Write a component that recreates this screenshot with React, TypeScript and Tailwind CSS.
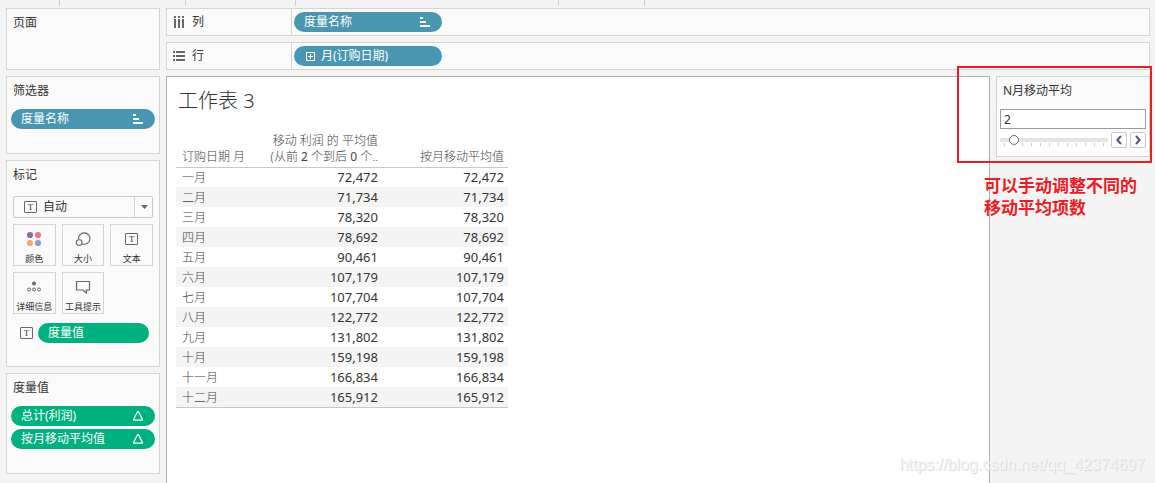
import { useState } from 'react';
import type { ReactNode } from 'react';

const rows = [
  { month: '一月', average: '72,472', monthly: '72,472' },
  { month: '二月', average: '71,734', monthly: '71,734' },
  { month: '三月', average: '78,320', monthly: '78,320' },
  { month: '四月', average: '78,692', monthly: '78,692' },
  { month: '五月', average: '90,461', monthly: '90,461' },
  { month: '六月', average: '107,179', monthly: '107,179' },
  { month: '七月', average: '107,704', monthly: '107,704' },
  { month: '八月', average: '122,772', monthly: '122,772' },
  { month: '九月', average: '131,802', monthly: '131,802' },
  { month: '十月', average: '159,198', monthly: '159,198' },
  { month: '十一月', average: '166,834', monthly: '166,834' },
  { month: '十二月', average: '165,912', monthly: '165,912' },
];

const ticks = Array.from({ length: 12 }, (_, i) => i + 1);

function TextIcon() {
  return (
    <span className="flex h-3 w-[13px] shrink-0 items-center justify-center rounded-[1px] border border-[#666] font-['Liberation_Serif',serif] text-[9px] leading-none text-[#333]">
      T
    </span>
  );
}

function SortIcon() {
  return (
    <svg width="10" height="10" viewBox="0 0 10 10" fill="currentColor" aria-hidden="true">
      <rect x="0" y="0" width="3" height="2" />
      <rect x="0" y="4" width="6" height="2" />
      <rect x="0" y="8" width="10" height="2" />
    </svg>
  );
}

function DeltaIcon() {
  return (
    <svg width="10" height="10" viewBox="0 0 10 10" fill="none" stroke="currentColor" strokeWidth="1.2" aria-hidden="true">
      <path d="M4.6 0.6h0.8L9.2 8v1.2H0.8V8z" />
    </svg>
  );
}

function ExpandIcon() {
  return (
    <svg width="9" height="9" viewBox="0 0 9 9" fill="none" stroke="currentColor" aria-hidden="true">
      <rect x="0.5" y="0.5" width="8" height="8" />
      <path d="M2 4.5h5M4.5 2v5" />
    </svg>
  );
}

function ColumnsIcon() {
  return (
    <svg width="12" height="12" viewBox="0 0 12 12" fill="#666" aria-hidden="true">
      <path d="M1 0h2v2H1zM5 0h2v2H5zM9 0h2v2H9zM1 3h2v9H1zM5 3h2v9H5zM9 3h2v9H9z" />
    </svg>
  );
}

function RowsIcon() {
  return (
    <svg width="12" height="10" viewBox="0 0 12 10" fill="#666" aria-hidden="true">
      <path d="M0 0h2v2H0zM0 4h2v2H0zM0 8h2v2H0zM3 0h9v2H3zM3 4h9v2H3zM3 8h9v2H3z" />
    </svg>
  );
}

function ColorIcon() {
  return (
    <svg width="16" height="16" viewBox="0 0 16 16" aria-hidden="true">
      <circle cx="4" cy="4" r="3.1" fill="#8a7099" />
      <circle cx="12" cy="4" r="3.1" fill="#fb7185" />
      <circle cx="4" cy="12" r="3.1" fill="#f4a77a" />
      <circle cx="12" cy="12" r="3.1" fill="#82a4cc" />
    </svg>
  );
}

function SizeIcon() {
  return (
    <svg width="16" height="16" viewBox="0 0 16 16" fill="none" stroke="#666" strokeWidth="1.1" aria-hidden="true">
      <path d="M3.6 8.5a5.7 5.7 0 1 1 3.6 4.4" />
      <circle cx="4.2" cy="11.6" r="2.9" />
    </svg>
  );
}

function DetailIcon() {
  return (
    <svg width="16" height="16" viewBox="0 0 16 16" fill="none" stroke="#666" aria-hidden="true">
      <circle cx="8" cy="4.5" r="2" fill="#666" stroke="none" />
      <circle cx="3" cy="10.5" r="1.5" />
      <circle cx="8" cy="10.5" r="1.5" />
      <circle cx="13" cy="10.5" r="1.5" />
    </svg>
  );
}

function TooltipIcon() {
  return (
    <svg width="16" height="16" viewBox="0 0 16 16" fill="none" stroke="#666" strokeWidth="1.2" strokeLinejoin="round" aria-hidden="true">
      <path d="M1.5 2.5h13v8.5h-3v3.2l-3.4-3.2H1.5z" />
    </svg>
  );
}

function Card({ title, className, children }: { title: string; className: string; children?: ReactNode }) {
  return (
    <section className={`border border-[#d4d4d4] bg-[#fafafa] ${className}`}>
      <h2 className="h-8 px-1.5 leading-7">{title}</h2>
      {children}
    </section>
  );
}

function Pill({ label, className, before, after }: { label: string; className: string; before?: ReactNode; after?: ReactNode }) {
  return (
    <button type="button" className={`flex h-5 items-center rounded-full pr-3 pl-2.5 text-left leading-5 text-white ${className}`}>
      {before}
      <span className="flex-1">{label}</span>
      {after}
    </button>
  );
}

function Shelf({ icon, label, children }: { icon: ReactNode; label: string; children: ReactNode }) {
  return (
    <section className="flex h-7 border border-[#d4d4d4] bg-[#fafafa]">
      <h2 className="flex w-[125px] shrink-0 items-center gap-[7px] border-r border-[#d4d4d4] pl-1.5">
        {icon}
        {label}
      </h2>
      <div className="flex items-center pl-0.5">{children}</div>
    </section>
  );
}

function MarkButton({ icon, label }: { icon: ReactNode; label: string }) {
  return (
    <button type="button" className="flex h-[42px] flex-col items-center border border-[#d4d4d4] bg-[#fafafa] pt-1.5 text-[9px] leading-3 whitespace-nowrap">
      <span className="flex h-4 items-center">{icon}</span>
      <span className="mt-1.5">{label}</span>
    </button>
  );
}

export default function App() {
  const [months, setMonths] = useState(2);
  const step = (by: number) => setMonths((n) => Math.min(12, Math.max(1, n + by)));

  return (
    <div className="relative flex min-h-screen flex-col bg-[#f4f4f4] font-['Noto_Sans','Noto_Sans_CJK_SC',sans-serif] text-xs text-[#333]">
      <div className="flex h-1.5 shrink-0">
        <span className="w-[60px] border-r border-[#d0d0d0]" />
        <span className="w-[126px] border-r border-[#d0d0d0]" />
        <span className="w-[110px] border-r border-[#d0d0d0]" />
        <span className="w-[263px] border-r border-[#d0d0d0]" />
        <span className="w-[86px] border-r border-[#d0d0d0]" />
      </div>

      <div className="flex flex-1 gap-1.5 pt-0.5 pr-[5px] pl-1.5">
        <aside className="flex w-[154px] shrink-0 flex-col gap-1.5">
          <Card title="页面" className="h-[62px]" />

          <Card title="筛选器" className="h-[78px]">
            <div className="flex flex-col px-1">
              <Pill label="度量名称" className="bg-[#4996b2]" after={<SortIcon />} />
            </div>
          </Card>

          <Card title="标记" className="h-[207px]">
            <div className="px-1.5 pt-[3px]">
              <div className="relative">
                <select aria-label="标记类型" className="block h-[22px] w-full appearance-none rounded-[2px] border border-[#c8c8c8] bg-[#fafafa] pl-[29px] text-xs leading-5">
                  <option>自动</option>
                </select>
                <span className="pointer-events-none absolute inset-0 flex items-center pl-[11px]">
                  <TextIcon />
                  <span className="ml-auto flex h-5 w-[19px] items-center justify-center border-l border-[#d4d4d4]">
                    <svg width="7" height="4" viewBox="0 0 7 4" fill="#666" aria-hidden="true">
                      <path d="M0 0h7L3.5 4z" />
                    </svg>
                  </span>
                </span>
              </div>

              <div className="mt-1.5 grid grid-cols-3 gap-1.5">
                <MarkButton icon={<ColorIcon />} label="颜色" />
                <MarkButton icon={<SizeIcon />} label="大小" />
                <MarkButton icon={<TextIcon />} label="文本" />
                <MarkButton icon={<DetailIcon />} label="详细信息" />
                <MarkButton icon={<TooltipIcon />} label="工具提示" />
              </div>

              <div className="mt-[9px] flex items-center gap-[5px] pr-1 pl-[7px]">
                <TextIcon />
                <Pill label="度量值" className="flex-1 bg-[#00b180]" />
              </div>
            </div>
          </Card>

          <Card title="度量值" className="h-[101px]">
            <div className="flex flex-col gap-[3px] px-1">
              <Pill label="总计(利润)" className="bg-[#00b180]" after={<DeltaIcon />} />
              <Pill label="按月移动平均值" className="bg-[#00b180]" after={<DeltaIcon />} />
            </div>
          </Card>
        </aside>

        <div className="flex min-w-0 flex-1 flex-col gap-1.5">
          <Shelf icon={<ColumnsIcon />} label="列">
            <Pill label="度量名称" className="w-[148px] bg-[#4996b2]" after={<SortIcon />} />
          </Shelf>
          <Shelf icon={<RowsIcon />} label="行">
            <Pill
              label="月(订购日期)"
              className="w-[148px] gap-1.5 bg-[#4996b2]"
              before={<span className="pl-0.5"><ExpandIcon /></span>}
            />
          </Shelf>

          <div className="flex flex-1 gap-1.5">
            <main className="min-w-0 flex-1 border border-b-0 border-[#b0b0b0] bg-white px-[9px] pt-2">
              <h1 className="px-0.5 text-xl leading-8 font-light">工作表 3</h1>

              <table className="mt-4 table-fixed border-separate border-spacing-0 border-b border-[#c8c8c8] text-right">
                <colgroup>
                  <col className="w-20" />
                  <col className="w-[126px]" />
                  <col className="w-[126px]" />
                </colgroup>
                <thead>
                  <tr className="align-bottom leading-4 text-[#444]">
                    <th scope="col" className="pb-0.5 pl-1.5 text-left font-light whitespace-nowrap">订购日期 月</th>
                    <th scope="col" className="pr-1 pb-0.5 font-light whitespace-nowrap">
                      移动 利润 的 平均值
                      <br />
                      (从前 <span className="font-normal">2</span> 个到后 <span className="font-normal">0</span> 个..
                    </th>
                    <th scope="col" className="pr-1 pb-0.5 font-light whitespace-nowrap">按月移动平均值</th>
                  </tr>
                </thead>
                <tbody className="[&>tr:first-child>*]:border-t [&>tr:first-child>*]:border-[#c8c8c8]">
                  {rows.map((row) => (
                    <tr key={row.month} className="h-5 leading-[19px] even:bg-[#f4f4f4]">
                      <th scope="row" className="pl-1.5 text-left font-light text-[#444]">{row.month}</th>
                      <td className="pr-1 text-[13px]">{row.average}</td>
                      <td className="pr-1 text-[13px]">{row.monthly}</td>
                    </tr>
                  ))}
                </tbody>
              </table>
            </main>

            <aside className="relative w-[154px] shrink-0">
              <section className="border border-[#d4d4d4] bg-white">
                <label htmlFor="months" className="block h-[29px] bg-[#fafafa] px-1.5 leading-7">N月移动平均</label>
                <div className="px-[3px] pt-[3px] pb-2">
                  <input
                    id="months"
                    type="text"
                    value={months}
                    onChange={(e) => setMonths(Number(e.target.value) || 1)}
                    className="block h-5 w-full border border-[#9b9b9b] bg-white px-[3px] text-xs"
                  />
                  <div className="mt-[3px] flex gap-[3px]">
                    <div className="flex-1 pt-0.5">
                      <input
                        type="range"
                        aria-label="N月移动平均"
                        min={1}
                        max={12}
                        value={months}
                        onChange={(e) => setMonths(Number(e.target.value))}
                        className="block h-[11px] w-full appearance-none bg-transparent [&::-webkit-slider-runnable-track]:h-1 [&::-webkit-slider-runnable-track]:bg-[#e3e3e3] [&::-webkit-slider-thumb]:-mt-[3px] [&::-webkit-slider-thumb]:size-2.5 [&::-webkit-slider-thumb]:appearance-none [&::-webkit-slider-thumb]:rounded-full [&::-webkit-slider-thumb]:border [&::-webkit-slider-thumb]:border-[#666] [&::-webkit-slider-thumb]:bg-white"
                      />
                      <div className="-mt-0.5 flex justify-between px-1">
                        {ticks.map((tick) => (
                          <span key={tick} className="h-[3px] w-px bg-[#ccc]" />
                        ))}
                      </div>
                    </div>
                    <button type="button" aria-label="减少" onClick={() => step(-1)} className="flex size-4 items-center justify-center rounded-[2px] border border-[#c8c8c8] bg-white">
                      <svg width="6" height="10" viewBox="0 0 6 10" fill="none" stroke="#4c5a73" strokeWidth="2" aria-hidden="true">
                        <path d="M5 1L1.4 5L5 9" />
                      </svg>
                    </button>
                    <button type="button" aria-label="增加" onClick={() => step(1)} className="flex size-4 items-center justify-center rounded-[2px] border border-[#c8c8c8] bg-white">
                      <svg width="6" height="10" viewBox="0 0 6 10" fill="none" stroke="#4c5a73" strokeWidth="2" aria-hidden="true">
                        <path d="M1 1L4.6 5L1 9" />
                      </svg>
                    </button>
                  </div>
                </div>
              </section>

              {/* callout around the parameter control */}
              <div className="pointer-events-none absolute -top-2.5 -right-0.5 -left-[39px] h-[97px] border-2 border-[#ed1c24]" />
              <p className="absolute top-[99px] -left-3 text-[17px] leading-[22px] font-bold whitespace-nowrap text-[#ed1c24]">
                可以手动调整不同的
                <br />
                移动平均项数
              </p>
            </aside>
          </div>
        </div>
      </div>

      <p className="pointer-events-none absolute right-2.5 bottom-2 font-['Liberation_Sans',sans-serif] text-base leading-5 text-[#f4f4f4] [text-shadow:1px_1px_1px_#d6d6d6]">
        https://blog.csdn.net/qq_42374697
      </p>
    </div>
  );
}
